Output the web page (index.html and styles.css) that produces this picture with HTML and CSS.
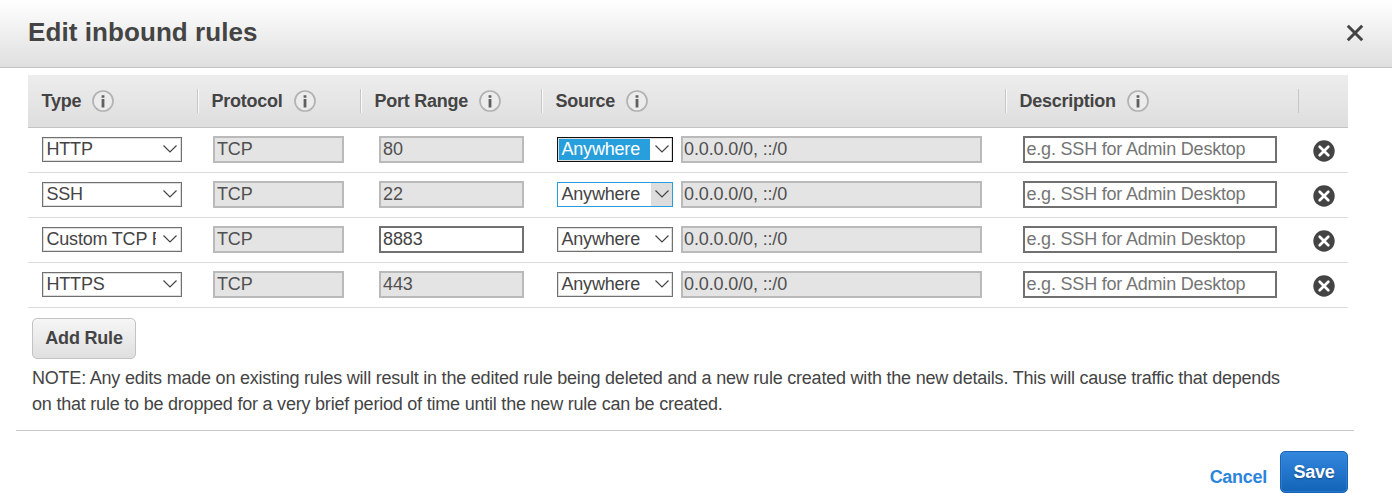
FILE: index.html
```html
<!DOCTYPE html>
<html lang="en">
<head>
<meta charset="utf-8">
<title>Edit inbound rules</title>
<link rel="stylesheet" href="styles.css">
</head>
<body>
<svg width="0" height="0" class="defs">
  <symbol id="info" viewBox="0 0 22 22"><circle cx="11" cy="11" r="10" fill="#ececec" stroke="#b2b2b2" stroke-width="1.7"/><path d="M9.6 5.2h2.8v2.5H9.6zM9.6 9.1h2.8v8.3H9.6z" fill="#606060"/></symbol>
  <symbol id="chevron" viewBox="0 0 16 10"><path d="M1.5 1.5 8 8l6.500-6.500" fill="none" stroke="#444" stroke-width="1.2"/></symbol>
  <symbol id="remove" viewBox="0 0 22 22"><circle cx="11" cy="11" r="10.700" fill="#444"/><path d="m6.700 6.700 8.600 8.600m0-8.600-8.600 8.600" stroke="#fff" stroke-width="2.700" stroke-linecap="round"/></symbol>
</svg>
<header class="dialog-header">
  <h1 class="title">Edit inbound rules</h1>
  <svg class="close" viewBox="0 0 18 18"><path d="m1.800 1.800 14.400 14.400m0-14.400L1.800 16.200" stroke="#444" stroke-width="3"/></svg>
</header>
<main class="content">
  <div class="row head">
    <div class="th"><span class="label">Type</span><svg class="info"><use href="#info"/></svg></div>
    <div class="th"><span class="label">Protocol</span><svg class="info"><use href="#info"/></svg></div>
    <div class="th"><span class="label">Port Range</span><svg class="info"><use href="#info"/></svg></div>
    <div class="th"><span class="label">Source</span><svg class="info"><use href="#info"/></svg></div>
    <div class="th"><span class="label">Description</span><svg class="info"><use href="#info"/></svg></div>
    <div class="th"></div>
  </div>
  <div class="row rule">
    <div class="td type"><div class="select"><span class="value">HTTP</span><svg class="chevron"><use href="#chevron"/></svg></div></div>
    <div class="td protocol"><input class="field" value="TCP" disabled></div>
    <div class="td port"><input class="field" value="80" disabled></div>
    <div class="td source"><div class="select active"><span class="value">Anywhere</span><svg class="chevron"><use href="#chevron"/></svg></div><input class="field" value="0.0.0.0/0, ::/0" disabled></div>
    <div class="td desc"><input class="field" placeholder="e.g. SSH for Admin Desktop"></div>
    <div class="td del"><svg class="remove"><use href="#remove"/></svg></div>
  </div>
  <div class="row rule">
    <div class="td type"><div class="select"><span class="value">SSH</span><svg class="chevron"><use href="#chevron"/></svg></div></div>
    <div class="td protocol"><input class="field" value="TCP" disabled></div>
    <div class="td port"><input class="field" value="22" disabled></div>
    <div class="td source"><div class="select hover"><span class="value">Anywhere</span><svg class="chevron"><use href="#chevron"/></svg></div><input class="field" value="0.0.0.0/0, ::/0" disabled></div>
    <div class="td desc"><input class="field" placeholder="e.g. SSH for Admin Desktop"></div>
    <div class="td del"><svg class="remove"><use href="#remove"/></svg></div>
  </div>
  <div class="row rule">
    <div class="td type"><div class="select"><span class="value">Custom TCP Rule</span><svg class="chevron"><use href="#chevron"/></svg></div></div>
    <div class="td protocol"><input class="field" value="TCP" disabled></div>
    <div class="td port"><input class="field" value="8883"></div>
    <div class="td source"><div class="select"><span class="value">Anywhere</span><svg class="chevron"><use href="#chevron"/></svg></div><input class="field" value="0.0.0.0/0, ::/0" disabled></div>
    <div class="td desc"><input class="field" placeholder="e.g. SSH for Admin Desktop"></div>
    <div class="td del"><svg class="remove"><use href="#remove"/></svg></div>
  </div>
  <div class="row rule">
    <div class="td type"><div class="select"><span class="value">HTTPS</span><svg class="chevron"><use href="#chevron"/></svg></div></div>
    <div class="td protocol"><input class="field" value="TCP" disabled></div>
    <div class="td port"><input class="field" value="443" disabled></div>
    <div class="td source"><div class="select"><span class="value">Anywhere</span><svg class="chevron"><use href="#chevron"/></svg></div><input class="field" value="0.0.0.0/0, ::/0" disabled></div>
    <div class="td desc"><input class="field" placeholder="e.g. SSH for Admin Desktop"></div>
    <div class="td del"><svg class="remove"><use href="#remove"/></svg></div>
  </div>
  <button class="add">Add Rule</button>
  <p class="note">NOTE: Any edits made on existing rules will result in the edited rule being deleted and a new rule created with the new details. This will cause traffic that depends<br>on that rule to be dropped for a very brief period of time until the new rule can be created.</p>
</main>
<footer class="footer">
  <a class="cancel">Cancel</a>
  <button class="save">Save</button>
</footer>
</body>
</html>
```
FILE: styles.css
```css
* { box-sizing: border-box; }
body { margin: 0; height: 503px; overflow: hidden; background: #fff; color: #444; font: 18px "Liberation Sans", Arial, sans-serif; }
.defs { display: none; }
.dialog-header { height: 68px; display: flex; justify-content: space-between; align-items: flex-start; padding: 0 28px; border-bottom: 1px solid #c4c4c4; background: linear-gradient(#fff, #dfdfdf); }
.title { margin: 17px 0 0; font-size: 26px; line-height: 30px; font-weight: bold; letter-spacing: 0.08px; white-space: nowrap; }
.close { width: 18px; height: 18px; margin-top: 24px; }
.content { padding: 7px 44px 0 28px; height: 355px; }
.row { display: grid; grid-template-columns: 170px 163px 181px 464px 293px 49px; height: 45px; border-bottom: 1px solid #dcdcdc; }
.head { height: 53px; background: linear-gradient(#ededed, #dedede); border-bottom: 1px solid #c3c3c3; }
.th { display: flex; align-items: center; gap: 11px; padding: 0 0 1px 13.5px; font-weight: bold; letter-spacing: -0.25px; white-space: nowrap; background: linear-gradient(90deg, #c6c6c6 1px, #fafafa 1px) right 14px / 2px 24px no-repeat; }
.th + .th { background-position: right -1px top 14px; }
.th:first-child { background-position: right -1px top 14px; }
.th:nth-child(-n+5) { margin-right: -1px; background-position: right 0 top 14px; }
.th:nth-child(5) { background-image: linear-gradient(90deg, #c6c6c6 1px, transparent 1px); }
.th:last-child { background: none; }
.label { padding-top: 2px; }
.info { width: 22px; height: 22px; }
.td { display: flex; align-items: flex-start; padding-top: 8px; }
.type { padding-left: 14px; }
.protocol { padding-left: 15px; }
.port { padding-left: 18px; }
.source { padding-left: 15px; gap: 8px; }
.desc { padding-left: 17px; }
.del { padding: 12px 0 0 13.5px; }
.field { height: 27px; margin: 0; padding: 0 1px 0 2px; border: 2px solid #707070; border-radius: 0; background: #fff; color: #444; font: 18px "Liberation Sans", Arial, sans-serif; letter-spacing: -0.13px; outline: 0; }
.field:disabled { border-color: #bababa; background: #e4e4e4; color: #505050; }
.field::placeholder { color: #757575; opacity: 1; letter-spacing: -0.2px; }
.protocol .field { width: 131px; }
.port .field { width: 145px; }
.source .field { width: 301px; padding-left: 1px; }
.desc .field { width: 254px; padding-left: 1.5px; }
.select { display: flex; width: 140px; height: 25px; margin-top: 1px; border: 1px solid #707070; background: #fff; box-shadow: inset 0 0 0 1px #ddd; }
.source .select { width: 116px; }
.value { flex: 1; height: 21px; margin: 1px 0 0 1px; padding-left: 2.5px; overflow: hidden; white-space: nowrap; line-height: 21px; letter-spacing: -0.2px; }
.type .value { margin-right: 3px; }
.chevron { width: 16px; height: 10px; margin: 6px 3px 0 3px; }
.source .value { margin-right: 1px; }
.source .chevron { margin: 6px 2px 0 3px; }
.active { border-color: #111; }
.active .value { background: #279fdc; color: #fff; }
.hover { border-color: #279fdc; box-shadow: none; background: linear-gradient(#ddd, #ddd) right / 21px 100% no-repeat; }
.remove { width: 22px; height: 22px; }
.add { display: block; width: 104px; height: 41px; margin: 10px 0 0 4px; padding: 0; border: 1px solid #c3c3c3; border-radius: 5px; background: linear-gradient(#f6f6f6, #dfdfdf); color: #444; font: bold 18px "Liberation Sans", Arial, sans-serif; letter-spacing: -0.2px; white-space: nowrap; }
.note { margin: 6px 0 0 4px; line-height: 26px; letter-spacing: -0.214px; white-space: nowrap; }
.footer { display: flex; justify-content: flex-end; margin: 7px 38px 0 16px; padding: 20px 6px 0 0; border-top: 1px solid #c6c6c6; gap: 13px; }
.cancel { margin-top: 15px; line-height: 22px; color: #2c85dc; font-weight: bold; letter-spacing: -0.28px; }
.save { width: 68px; height: 42px; padding: 0; border: 1px solid #1763b6; border-radius: 5px; background: linear-gradient(#3387dd, #1264b8); box-shadow: inset 0 0 0 1px #3c8adb80; color: #fff; font: bold 18px "Liberation Sans", Arial, sans-serif; letter-spacing: -0.2px; text-shadow: 0 1px 2px #0005; }
```
